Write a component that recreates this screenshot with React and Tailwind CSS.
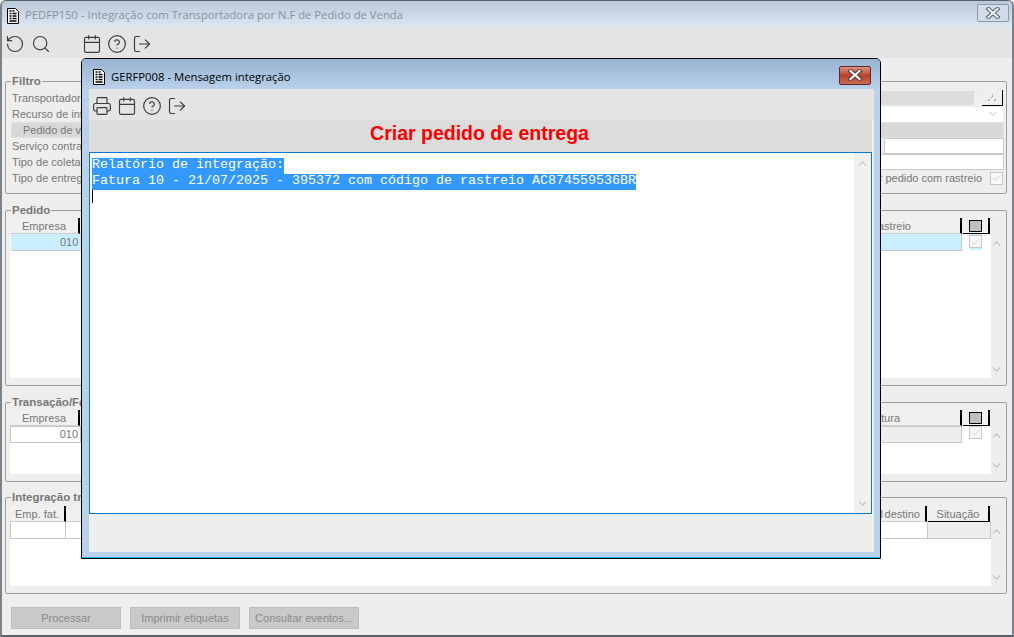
import { RotateCcw, Search, Calendar, CircleHelp, LogOut, Printer, ChevronUp, ChevronDown, Check } from "lucide-react";

const sans = "font-['Liberation_Sans',Arial,sans-serif]";

function DocIcon() {
  return (
    <svg width="12" height="16" viewBox="0 0 12 16" className="shrink-0">
      <path d="M.5.5h8l3 3v12H.5z" fill="#fff" stroke="#000" />
      <path d="M2.5 3h2M5.5 3h2M2.5 5.5h2M5.5 5.5h4M2.5 8h2M5.5 8h4M2.5 10.5h2M5.5 10.5h4M2.5 13h7" stroke="#000" strokeWidth="1.3" />
    </svg>
  );
}

function CloseGlyph({ outline, fill }) {
  return (
    <svg width="16" height="12" viewBox="0 0 16 12">
      <path d="M3.5 2l9 8M12.5 2l-9 8" stroke={outline} strokeWidth="4.2" strokeLinecap="square" />
      <path d="M3.5 2l9 8M12.5 2l-9 8" stroke={fill} strokeWidth="2.2" strokeLinecap="square" />
    </svg>
  );
}

function Head({ w, children, pr, black, className = "" }) {
  return (
    <div
      className={`h-[16px] bg-[#f0f0f0] flex items-center shrink-0 text-[11px] leading-[14px] text-[#777] overflow-hidden border-r-2 border-r-black ${black ? "border-b border-b-black" : "border-b border-b-[#d0d0d0]"} ${pr !== undefined ? "justify-end" : "justify-center"} ${className}`}
      style={{ width: w, paddingRight: pr }}
    >
      {children}
    </div>
  );
}

function BoxHead() {
  return (
    <div className="w-[27px] h-[16px] ml-[1px] shrink-0 bg-[#f0f0f0] border-r-2 border-b border-black flex items-center justify-center">
      <div className="w-[13px] h-[12px] bg-[#c0c0c0] border border-black" />
    </div>
  );
}

function Scroll({ h }) {
  return (
    <div className="w-[15px] shrink-0 bg-[#eeeeee] flex flex-col items-center justify-between pr-[5px] text-[#c4c4c4]" style={{ height: h }}>
      <ChevronUp size={13} strokeWidth={2.5} className="mt-[3px]" />
      <ChevronDown size={13} strokeWidth={2.5} className="mb-[2px]" />
    </div>
  );
}

function Cb() {
  return (
    <div className="w-[13px] h-[13px] border border-[#c8c8c8] bg-[#f7f7f7] flex items-center justify-center">
      <Check size={12} className="text-[#c0c0c0]" strokeWidth={1.5} />
    </div>
  );
}

function Group({ title, className, children }) {
  return (
    <fieldset className={`ml-[5px] w-[1002px] shrink-0 border border-[#9c9c9c] rounded-[2px] pl-[4px] ${className}`}>
      <legend className="ml-[1px] px-[1px] text-[11.5px] leading-[14px] font-bold text-[#777]">{title}</legend>
      {children}
    </fieldset>
  );
}

function Row({ label, children, band }) {
  return (
    <div className={`h-[16px] flex items-center text-[11px] leading-[14px] text-[#777] ${band ? "bg-[#d8d8d8] border border-[#e0e0e0] ml-[1px] mr-[2px]" : ""}`}>
      <span className={`w-[70px] whitespace-nowrap ${band ? "pl-[11px]" : "pl-[2px]"}`}>{label}</span>
      <div className="flex-1" />
      {children}
    </div>
  );
}

function Tool({ Icon, className = "" }) {
  return <Icon size={20} strokeWidth={1.4} className={`text-[#3c3c3c] shrink-0 ${className}`} />;
}

export default function App() {
  return (
    <div className={`relative w-[1014px] h-[637px] overflow-hidden bg-[#eeeeee] ${sans}`}>
      <div className="w-[1014px] h-[637px] flex flex-col border-x-2 border-b-2 border-t border-x-[#7a828b] border-b-[#5b6168] border-t-[#5b6168] rounded-t-[6px] overflow-hidden">
        {/* title bar */}
        <div className="h-[26px] shrink-0 bg-gradient-to-b from-[#b9c8d8] to-[#dbe7f4] flex items-center pt-[3px] pl-[5px] pr-[3px]">
          <DocIcon />
          <span className="ml-[6px] text-[11.25px] font-['Open_Sans',sans-serif] text-[#8a929a]">PEDFP150 - Integração com Transportadora por N.F de Pedido de Venda</span>
          <div className="ml-auto -mt-[5px] w-[32px] h-[18px] border border-[#8d9aa8] rounded-[2px] bg-[#d0dcea] flex items-center justify-center">
            <CloseGlyph outline="#5d6670" fill="#e9eef4" />
          </div>
        </div>
        {/* toolbar */}
        <div className="h-[31px] shrink-0 bg-[#e4e4e4] flex items-center pl-[3px] pt-[2px]">
          <Tool Icon={RotateCcw} />
          <Tool Icon={Search} className="ml-[6px]" />
          <Tool Icon={Calendar} className="ml-[31px]" />
          <Tool Icon={CircleHelp} className="ml-[5px]" />
          <Tool Icon={LogOut} className="ml-[5px]" />
        </div>
        {/* body */}
        <div className="flex-1 flex flex-col text-[#777] -ml-[2px] pt-[16px]">
          <Group title="Filtro" className="h-[120px] pt-[2px]">
            <Row label="Transportador">
              <div className="w-[96px] h-[16px] bg-[#dcdcdc] border border-[#eeeeee] mr-[7px]" />
              <div className="w-[21px] h-[16px] mr-[3px] bg-[#efefef] border-r border-b border-black flex items-center justify-center">
                <svg width="10" height="8" viewBox="0 0 10 8"><path d="M1 7l2-2M4 4l2-2M7 7l2-2M5 1l1 0" stroke="#8f8f8f" /></svg>
              </div>
            </Row>
            <Row label="Recurso de integração">
              <div className="w-[123px] h-[15px] bg-white flex items-center justify-end pr-[4px] mr-[3px]"><ChevronDown size={12} className="text-[#bdbdbd]" /></div>
            </Row>
            <Row label="Pedido de venda" band />
            <Row label="Serviço contratado">
              <div className="w-[120px] h-[16px] bg-white border border-[#c8c8c8] mr-[2px]" />
            </Row>
            <Row label="Tipo de coleta">
              <div className="w-[124px] h-[16px] bg-white border border-[#c8c8c8] mr-[2px]" />
            </Row>
            <Row label="Tipo de entrega">
              <span className="mr-[8px]">Gerar pedido com rastreio</span>
              <div className="mr-[3px]"><Cb /></div>
            </Row>
          </Group>

          <Group title="Pedido" className="h-[183px] mt-[9px] pt-[1px]">
            <div className="flex w-[980px]">
              <Head w={70}>Empresa</Head>
              <Head pr={49} className="flex-1">rastreio</Head>
              <BoxHead />
            </div>
            <div className="flex">
              <div className="w-[981px] h-[144px] bg-white">
                <div className="flex h-[17px] items-start">
                  <div className="w-[952px] h-[17px] bg-[#c9eeff] border border-t-0 border-white border-b-[#c8c8c8] border-r-[#c8c8c8] text-[11px] leading-[16px] text-[#777] pl-[49px]">010</div>
                  <div className="flex-1 h-[17px] flex justify-center pr-[2px]"><div className="bg-[#c9eeff] h-[16px] pt-[1px]"><Cb /></div></div>
                </div>
              </div>
              <Scroll h={144} />
            </div>
          </Group>

          <Group title="Transação/Fatura" className="h-[87px] mt-[9px] pt-[1px]">
            <div className="flex w-[980px]">
              <Head w={70}>Empresa</Head>
              <Head pr={60} className="flex-1">Fatura</Head>
              <BoxHead />
            </div>
            <div className="flex">
              <div className="w-[981px] h-[48px] bg-white">
                <div className="flex h-[17px]">
                  <div className="w-[71px] h-[17px] border border-[#c8c8c8] text-[11px] leading-[15px] text-right pr-[2px]">010</div>
                  <div className="w-[881px] h-[17px] bg-[#eeeeee] border border-[#c8c8c8]" />
                  <div className="flex-1 flex justify-center pr-[2px]"><Cb /></div>
                </div>
              </div>
              <Scroll h={48} />
            </div>
          </Group>

          <Group title="Integração transportadora" className="h-[104px] mt-[8px] pt-[2px]">
            <div className="flex w-[980px]">
              <Head w={56}>Emp. fat.</Head>
              <Head pr={5} className="flex-1 [word-spacing:-1.5px]">Canal destino</Head>
              <Head w={62} black className="ml-[1px]">Situação</Head>
            </div>
            <div className="flex">
              <div className="w-[981px] h-[64px] bg-white">
                <div className="flex h-[17px] border-b border-[#c8c8c8]">
                  <div className="w-[56px] border-x border-[#c8c8c8]" />
                  <div className="flex-1 border-r border-[#c8c8c8]" />
                  <div className="w-[63px] bg-[#eeeeee] border-r border-[#c8c8c8]" />
                </div>
              </div>
              <Scroll h={64} />
            </div>
          </Group>

          <div className="flex gap-[9px] ml-[11px] mt-[13px]">
            {["Processar", "Imprimir etiquetas", "Consultar eventos..."].map((t) => (
              <div key={t} className="w-[110px] h-[22px] bg-[#c9c9c9] border border-[#bdbdbd] flex items-center justify-center text-[11px] text-[#8a8a8a]">{t}</div>
            ))}
          </div>
        </div>
      </div>

      {/* modal window */}
      <div className="absolute left-[81px] top-[58px] w-[800px] h-[501px] flex flex-col bg-[#b9d1ea] border border-black rounded-t-[5px] overflow-hidden shadow-[inset_0_-1px_0_#19b5e5]">
        <div className="h-[30px] shrink-0 bg-gradient-to-b from-[#98b3d1] to-[#b9d1ea] flex items-center pt-[6px] pl-[11px] pr-[9px]">
          <DocIcon />
          <span className="ml-[6px] text-[11.3px] font-['Open_Sans',sans-serif] text-black">GERFP008 - Mensagem integração</span>
          <div className="ml-auto w-[32px] h-[19px] -mt-[4px] border border-[#5d2a2a] rounded-[2px] bg-gradient-to-b from-[#dc9282] via-[#b8412a] to-[#c96b58] flex items-center justify-center">
            <CloseGlyph outline="#5a3a3a" fill="#ffffff" />
          </div>
        </div>
        <div className="h-[463px] ml-[7px] mr-[6px] bg-[#eeeeee] flex flex-col">
          <div className="h-[31px] shrink-0 bg-[#e4e4e4] flex items-center pl-[3px] pt-[2px]">
            <Tool Icon={Printer} />
            <Tool Icon={Calendar} className="ml-[5px]" />
            <Tool Icon={CircleHelp} className="ml-[5px]" />
            <Tool Icon={LogOut} className="ml-[5px]" />
          </div>
          <div className="h-[32px] shrink-0 bg-[#dcdcdc] mr-[2px] flex items-center justify-center pb-[6px] pr-[2px] text-[19.5px] leading-[24px] font-bold text-[#fb0000]">Criar pedido de entrega</div>
          <div className="h-[362px] mr-[2px] border border-[#0a78d0] bg-white flex shrink-0">
            <div className="flex-1 pl-[2px] pt-[2px] font-['Liberation_Mono',monospace] text-[13.33px]">
              <div className="h-[16px]"><span className="bg-[#3399ff] text-white inline-block h-[16px] leading-[14px]">Relatório de integração:</span></div>
              <div className="h-[16px]"><span className="bg-[#3399ff] text-white inline-block h-[16px] leading-[14px]">Fatura 10 - 21/07/2025 - 395372 com código de rastreio AC874559536BR</span></div>
              <div className="w-[1px] h-[16px] bg-black" />
            </div>
            <div className="w-[17px] bg-[#f0f0f0] flex flex-col items-center justify-between py-[1px] text-[#c4c4c4]">
              <ChevronUp size={13} strokeWidth={2.5} className="mt-[3px]" />
              <ChevronDown size={13} strokeWidth={2.5} className="mb-[2px]" />
            </div>
          </div>
        </div>
      </div>
    </div>
  );
}
